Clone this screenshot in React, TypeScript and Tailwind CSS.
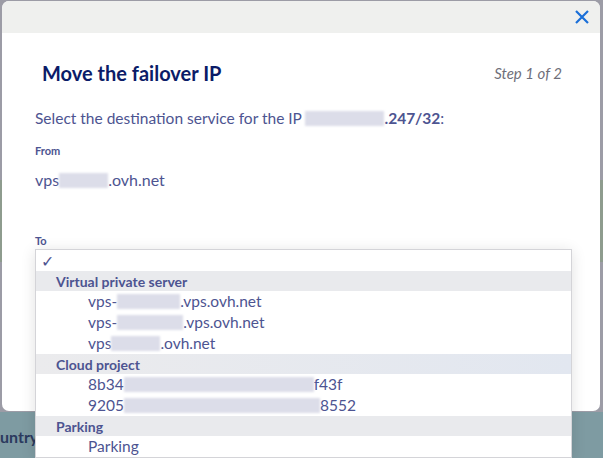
import React from 'react';

function Blur({ w }: { w: number }) {
    return <span className="inline-block h-[15px] bg-[#dcdde9] align-[-2px] blur-[1px]" style={{ width: w }} />;
}

const groups = [
    {
        label: 'Virtual private server',
        items: [
            ['vps-', 63, '.vps.ovh.net'],
            ['vps-', 66, '.vps.ovh.net'],
            ['vps', 49, '.ovh.net'],
        ],
    },
    {
        label: 'Cloud project',
        items: [
            ['8b34', 190, 'f43f'],
            ['9205', 196, '8552'],
        ],
    },
    {
        label: 'Parking',
        items: [['Parking', 0, '']],
    },
] as const;

export default function App() {
    return (
        <div className="relative h-[458px] w-[603px] overflow-hidden bg-[linear-gradient(to_bottom,#9c9ca6_0px,#9c9ca6_180px,#8e9c8e_180px,#8e9c8e_262px,#9c9ca6_262px)] pt-[1px] font-['Lato',sans-serif] text-[#4d5491]">
            {/* modal */}
            <div className="mx-[2px] h-[410px] w-[598px] rounded-[7px] bg-white">
                <div className="flex h-[32px] items-center justify-end rounded-t-[7px] bg-[#eff0ee] pr-[11px]">
                    <svg width="14" height="14" viewBox="0 0 14 14" fill="none" stroke="#1a6fd8" strokeWidth="2.2">
                        <path d="M1 1 L13 13 M13 1 L1 13" />
                    </svg>
                </div>

                <div className="mt-[26px] flex items-center justify-between pl-[40px] pr-[38px]">
                    <h2 className="text-[20px] font-bold leading-[28px] text-[#0b1c68]">Move the failover IP</h2>
                    <span className="text-[15px] italic text-[#6f6f7a]">Step 1 of 2</span>
                </div>

                <div className="px-[33px]">
                    <p className="mt-[21px] text-[15.5px] leading-[20px]">
                        Select the destination service for the IP <Blur w={79} />
                        <span className="font-bold">.247/32</span>:
                    </p>

                    <div className="mt-[16px] text-[11px] font-bold leading-[14px]">From</div>
                    <div className="mt-[12px] text-[16px] leading-[20px]">
                        vps<Blur w={49} />.ovh.net
                    </div>

                    <div className="mt-[44px] text-[11px] font-bold leading-[14px]">To</div>

                    {/* opened select list */}
                    <div className="relative z-10 mt-[1px] w-[537px] border border-[#d4d4d8] bg-white shadow-[0_2px_14px_rgba(0,0,0,0.12)]">
                        <div className="flex h-[21px] items-center pl-[5px] text-[16px]">✓</div>
                        {groups.map((g) => (
                            <div key={g.label}>
                                <div
                                    className={
                                        g.label === 'Cloud project'
                                            ? 'flex h-[20px] items-center bg-[linear-gradient(to_right,#ebebed,#e2e7f0)] pl-[20px] text-[14px] font-bold'
                                            : 'flex h-[20px] items-center bg-[#e9eaed] pl-[20px] text-[14px] font-bold'
                                    }
                                >
                                    {g.label}
                                </div>
                                {g.items.map(([a, w, b], i) => (
                                    <div key={i} className="flex h-[21px] items-center pl-[52px] text-[15.5px]">
                                        {a}
                                        {w > 0 && <Blur w={w} />}
                                        {b}
                                    </div>
                                ))}
                            </div>
                        ))}
                    </div>
                </div>
            </div>

            {/* page behind the overlay */}
            <div className="mt-[1px] h-[46px] bg-[#7e9ba2] pt-[13px]">
                <span className="text-[16px] font-bold text-[#2b3a5e]">untry</span>
            </div>
        </div>
    );
}
